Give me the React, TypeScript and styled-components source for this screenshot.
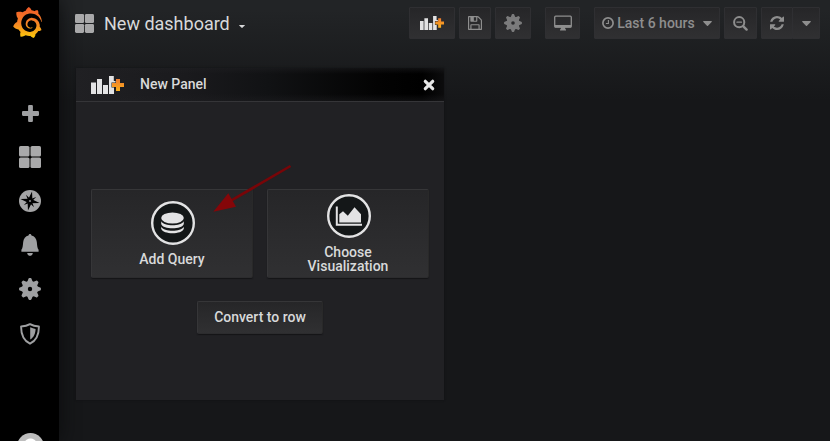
import React from "react";
import styled, { createGlobalStyle } from "styled-components";
import { SiGrafana } from "react-icons/si";

const Global = createGlobalStyle`
  * { box-sizing: border-box; }
  html, body { margin: 0; background: #161719; overflow: hidden; }
  body { font-family: Roboto, "Liberation Sans", sans-serif; color: #d8d9da; }
  svg { display: block; flex: none; }
  button { font: inherit; }
`;

const Shell = styled.div`
  display: flex;
  width: 830px;
  height: 441px;
  overflow: hidden;
  background: linear-gradient(180deg, #222426 10px, #161719 100px);
`;

const Sidebar = styled.aside`
  display: flex;
  flex-direction: column;
  align-items: center;
  flex: none;
  width: 59px;
  height: 441px;
  padding-top: 7px;
  background: #000;
  box-shadow: 0 0 20px #0b0c0d;
`;

const Brand = styled.div`
  flex: none;
  height: 84px;
  width: 36px;
`;

const SideLink = styled.a`
  display: flex;
  align-items: center;
  justify-content: center;
  width: 59px;
  height: 44.1px;
  flex: none;
  padding-left: 1px;
  color: #9fa0a2;
`;

const Avatar = styled.div`
  flex: none;
  width: 27px;
  height: 27px;
  margin: 77px 0 0 1px;
  border-radius: 50%;
  background: radial-gradient(circle at 50% 12px, #fff 0 6px, #bdbdbd 7px);
`;

const Main = styled.main`
  flex: 1;
  min-width: 0;
  padding: 7px 10px 0 17px;
`;

const Navbar = styled.header`
  display: flex;
  align-items: flex-start;
  justify-content: space-between;
  height: 61px;
`;

const Title = styled.div`
  display: flex;
  align-items: center;
  height: 32px;
  margin-left: -1px;
  font-size: 18px;
  white-space: nowrap;
  color: #d8d9da;
`;

const TitleText = styled.span`
  margin: 1px 9px 0 10px;
`;

const TitleCaret = styled.span`
  margin-top: 6px;
`;

const Tools = styled.div`
  display: flex;
`;

const Tool = styled.button<{ $w: number; $gap?: number; $dim?: boolean }>`
  display: flex;
  align-items: center;
  justify-content: center;
  width: ${(p) => p.$w}px;
  height: 32px;
  padding: 0;
  margin-left: ${(p) => p.$gap ?? 0}px;
  border: 1px solid #2f2f32;
  border-radius: 1px;
  background: linear-gradient(180deg, #262628, #303032);
  color: ${(p) => (p.$dim ? "#7b7b7c" : "#8e8e8e")};
  font-size: 14px;
  font-weight: 500;
  white-space: nowrap;
`;

const ToolLabel = styled.span`
  margin: 0 8px 0 3px;
`;

const Panel = styled.section`
  width: 368px;
  height: 332px;
  background: #212124;
  box-shadow: 0 0 2px #101113;
`;

const PanelHeader = styled.div`
  display: flex;
  align-items: center;
  height: 34px;
  padding: 0 9px 0 15px;
  border-bottom: 1px solid #353538;
  background:
    linear-gradient(180deg, rgba(31, 31, 34, 0.5), transparent 6px, transparent 26px, rgba(31, 31, 34, 0.45)),
    linear-gradient(90deg, #202023, #1a1a1d 30%, #111214 52%, #030303 82%, #000 94%, #0c0c0d);
`;

const PanelTitle = styled.h1`
  flex: 1;
  margin: 0 0 2px 16px;
  font-size: 14px;
  font-weight: 500;
  line-height: 18px;
`;

const PanelBody = styled.div`
  display: flex;
  flex-direction: column;
  align-items: center;
  padding-top: 87px;
`;

const Choices = styled.div`
  display: flex;
  gap: 14px;
`;

const buttonSurface = `
  border: 1px solid #363638;
  border-right-color: #292929;
  border-bottom-color: #2c2c2e;
  border-radius: 2px;
  background: linear-gradient(180deg, #262628, #303032);
  box-shadow: 0 1px 1px #151517;
  color: #d8d9da;
  font-size: 14px;
  font-weight: 500;
  line-height: 14px;
`;

const Choice = styled.button`
  ${buttonSurface}
  display: flex;
  flex-direction: column;
  align-items: center;
  justify-content: center;
  gap: 7px;
  width: 162px;
  height: 89px;
  padding: 0 30px;
`;

const ChoiceIcon = styled.span`
  padding-left: 2px;
`;

const Convert = styled.button`
  ${buttonSurface}
  width: 126px;
  height: 33px;
  margin-top: 23px;
  padding: 0 0 1px;
`;

const Pointer = styled.svg`
  position: absolute;
  left: 205px;
  top: 160px;
  pointer-events: none;
`;

function Logo() {
  return (
    <>
      <svg width="0" height="0">
        <defs>
          <linearGradient id="flame" x1="0" y1="0" x2="0" y2="1">
            <stop offset="0" stopColor="#f05a28" />
            <stop offset="0.5" stopColor="#f58026" />
            <stop offset="1" stopColor="#fbca0a" />
          </linearGradient>
        </defs>
      </svg>
      <SiGrafana size={31} fill="url(#flame)" />
    </>
  );
}

function Grid({ size }: { size: number }) {
  return (
    <svg width={size} height={size} viewBox="0 0 22 22" fill="#a9a9aa">
      <rect width="10.5" height="10.5" rx="1.6" />
      <rect x="11.5" width="10.5" height="10.5" rx="1.6" />
      <rect y="11.5" width="10.5" height="10.5" rx="1.6" />
      <rect x="11.5" y="11.5" width="10.5" height="10.5" rx="1.6" />
    </svg>
  );
}

function Plus() {
  return (
    <svg width="17" height="17" viewBox="0 0 17 17" fill="currentColor">
      <rect x="6.1" y="0" width="4.8" height="17" rx="1.1" />
      <rect x="0" y="6.1" width="17" height="4.8" rx="1.1" />
    </svg>
  );
}

function Compass() {
  return (
    <svg width="22" height="22" viewBox="0 0 22 22">
      <circle cx="11" cy="11" r="11" fill="#a5a5a6" />
      <g transform="rotate(12 11 11)" fill="#000">
        <path d="M11 1.2 13 9 20.800 11 13 13 11 20.800 9 13 1.200 11 9 9Z" />
        <path d="M5.800 5.800 10 8.500 12 8.500 16.200 5.800 13.500 10 13.500 12 16.200 16.200 12 13.500 10 13.500 5.800 16.200 8.500 12 8.500 10Z" />
      </g>
      <circle cx="11" cy="11" r="1.1" fill="#858586" />
    </svg>
  );
}

function Bell() {
  return (
    <svg width="18" height="22" viewBox="0 0 18 22" fill="currentColor">
      <path d="M9 0C8.2 0 7.6.6 7.5 1.5 4.5 2.2 2.5 4.7 2.2 8 1.8 12 1.7 14 .4 15.8V17.7H17.6V15.8C16.3 14 16.2 12 15.8 8 15.5 4.7 13.500 2.200 10.500 1.500 10.400.6 9.800 0 9 0Z" />
      <path d="M6.200 19H11.800C11.600 20.800 10.600 21.800 9 21.800S6.400 20.800 6.200 19Z" />
    </svg>
  );
}

const TEETH = [0, 45, 90, 135, 180, 225, 270, 315];

function Gear({ size, hole }: { size: number; hole: string }) {
  return (
    <svg width={size} height={size} viewBox="0 0 22 22" fill="currentColor">
      <circle cx="11" cy="11" r="8" />
      {TEETH.map((a) => (
        <path key={a} transform={`rotate(${a} 11 11)`} d="M8 4.500 9.400.9Q9.600.1 10.300.1H11.700Q12.400.1 12.600.9L14 4.500Z" />
      ))}
      <circle cx="11" cy="11" r="2.200" fill={hole} />
    </svg>
  );
}

function Shield() {
  return (
    <svg width="20" height="22" viewBox="0 0 20 22">
      <path d="M10 1.100C7.500 2.700 4.300 3.400 1.100 3.500 1 11.500 3.700 17.500 10 20.700 16.300 17.500 19 11.500 18.900 3.500 15.700 3.400 12.500 2.700 10 1.100Z" fill="none" stroke="currentColor" strokeWidth="1.900" strokeLinejoin="round" />
      <path d="M10.200 4.300C12 5.200 13.800 5.700 15.600 5.900 15.400 10.500 14 14 10.200 16.600Z" fill="currentColor" />
    </svg>
  );
}

function AddPanel({ width, height, gradient }: { width: number; height: number; gradient: string }) {
  return (
    <svg width={width} height={height} viewBox="0 0 33 18" preserveAspectRatio="none">
      <defs>
        <linearGradient id={gradient} x1="0" y1="0" x2="0" y2="1">
          <stop offset="0" stopColor="#ee7a2e" />
          <stop offset="1" stopColor="#fbb01c" />
        </linearGradient>
      </defs>
      <path fill="#e3e3e4" d="M0 6.500H5V18H0ZM6 3H11V18H6ZM12 9H17V18H12ZM18 0H22.800V5H24.500V6.500H20.500V11.500H23V18H18Z" />
      <path fill={`url(#${gradient})`} d="M25 3H29V7H33V11H29V15H25V11H21V7H25Z" />
    </svg>
  );
}

function Save() {
  return (
    <svg width="14" height="14" viewBox="0 0 1536 1536" fill="currentColor">
      <path d="M384 1408h768v-384h-768v384zm896 0h128v-896q0-14-10-38.500t-20-34.500l-281-281q-10-10-34-20t-39-10v416q0 40-28 68t-68 28h-576q-40 0-68-28t-28-68v-416h-128v1280h128v-416q0-40 28-68t68-28h832q40 0 68 28t28 68v416zm-384-928v-320q0-13-9.500-22.500t-22.500-9.500h-192q-13 0-22.500 9.500t-9.500 22.500v320q0 13 9.500 22.500t22.500 9.500h192q13 0 22.500-9.500t9.500-22.500zm640 32v928q0 40-28 68t-68 28h-1344q-40 0-68-28t-28-68v-1344q0-40 28-68t68-28h928q40 0 88 20t76 48l280 280q28 28 48 76t20 88z" />
    </svg>
  );
}

function Monitor() {
  return (
    <svg width="18" height="16" viewBox="0 0 18 16">
      <rect x=".7" y="1.200" width="16.600" height="11" rx="1" fill="none" stroke="currentColor" strokeWidth="1.300" />
      <path d="M1 10H17V12.500H1ZM6.800 12.500H11.200V14.200H12V15.600H6V14.200H6.800Z" fill="currentColor" />
    </svg>
  );
}

function Clock() {
  return (
    <svg width="12" height="12" viewBox="0 0 12 12" fill="none" stroke="currentColor">
      <circle cx="6" cy="6" r="5.100" strokeWidth="1.700" />
      <path d="M6.400 3V6.500H3.900" strokeWidth="1.100" />
    </svg>
  );
}

function Caret({ width, height }: { width: number; height: number }) {
  return (
    <svg width={width} height={height} viewBox="0 0 10 5" preserveAspectRatio="none" fill="currentColor">
      <path d="M.7 0H9.300Q10.200.2 9.600.9L5.600 4.700Q5 5.200 4.400 4.700L.4.900Q-.2.2.7 0Z" />
    </svg>
  );
}

function ZoomOut() {
  return (
    <svg width="15" height="15" viewBox="0 0 15 15" fill="none" stroke="currentColor" strokeLinecap="round">
      <circle cx="6.200" cy="6.200" r="5.100" strokeWidth="2" />
      <path d="M10.300 10.300 13.600 13.600" strokeWidth="2.400" />
      <path d="M3.900 6.200H8.500" strokeWidth="1.200" />
    </svg>
  );
}

function Refresh() {
  return (
    <svg width="14" height="14" viewBox="0 0 1536 1536" fill="currentColor">
      <path d="M1511 928q0 5-1 7-64 268-268 434.500t-478 166.500q-146 0-282.500-55t-243.500-157l-129 129q-19 19-45 19t-45-19-19-45v-448q0-26 19-45t45-19h448q26 0 45 19t19 45-19 45l-137 137q71 66 161 102t187 36q134 0 250-65t186-179q11-17 53-117 8-23 30-23h192q13 0 22.500 9.500t9.500 22.500zm25-800v448q0 26-19 45t-45 19h-448q-26 0-45-19t-19-45 19-45l138-138q-148-137-349-137-134 0-250 65t-186 179q-11 17-53 117-8 23-30 23h-199q-13 0-22.500-9.500t-9.500-22.500v-7q65-268 270-434.500t480-166.500q146 0 284 55.500t245 156.500l130-129q19-19 45-19t45 19 19 45z" />
    </svg>
  );
}

function Close() {
  return (
    <svg width="12" height="12" viewBox="0 0 12 12" stroke="#e6e6e6" strokeWidth="3.200" strokeLinecap="round">
      <path d="M2.300 2.300 9.700 9.700M9.700 2.300 2.300 9.700" />
    </svg>
  );
}

function QueryIcon() {
  return (
    <svg width="44" height="44" viewBox="0 0 44 44" fill="#e3e3e4">
      <circle cx="22" cy="22" r="20.800" fill="#141718" stroke="#e3e3e4" strokeWidth="2.400" />
      <ellipse cx="21.500" cy="17" rx="11.300" ry="5.600" />
      <path d="M10.200 20.300C13 25.600 30 25.600 32.800 20.300V23C31 28.800 12 28.800 10.200 23Z" />
      <path d="M10.200 25.700C13 31 30 31 32.800 25.700V27.800C31 33.800 12 33.800 10.200 27.800Z" />
    </svg>
  );
}

function ChartIcon() {
  return (
    <svg width="44" height="44" viewBox="0 0 44 44">
      <circle cx="22" cy="22" r="20.800" fill="#141718" stroke="#e3e3e4" strokeWidth="2.400" />
      <path d="M9.800 12.600V30.700H35" fill="none" stroke="#e3e3e4" strokeWidth="2" />
      <path d="M12.300 28.500V20.300L16 17.300 20.800 21.700 27.500 13.200 34 20.200V28.500Z" fill="#e3e3e4" />
    </svg>
  );
}

export default function App() {
  return (
    <>
      <Global />
      <Shell>
        <Sidebar>
          <Brand><Logo /></Brand>
          <SideLink><Plus /></SideLink>
          <SideLink><Grid size={22} /></SideLink>
          <SideLink><Compass /></SideLink>
          <SideLink><Bell /></SideLink>
          <SideLink><Gear size={22} hole="#000" /></SideLink>
          <SideLink><Shield /></SideLink>
          <Avatar />
        </Sidebar>
        <Main>
          <Navbar>
            <Title>
              <Grid size={19} />
              <TitleText>New dashboard</TitleText>
              <TitleCaret><Caret width={6} height={3} /></TitleCaret>
            </Title>
            <Tools>
              <Tool $w={46}><AddPanel width={24} height={14} gradient="plus-toolbar" /></Tool>
              <Tool $w={32} $gap={4}><Save /></Tool>
              <Tool $w={36} $gap={4} $dim><Gear size={18} hole="#2b2b2d" /></Tool>
              <Tool $w={35} $gap={14}><Monitor /></Tool>
              <Tool $w={126} $gap={14}>
                <Clock />
                <ToolLabel>Last 6 hours</ToolLabel>
                <Caret width={9} height={5} />
              </Tool>
              <Tool $w={33} $gap={4}><ZoomOut /></Tool>
              <Tool $w={32} $gap={4}><Refresh /></Tool>
              <Tool $w={28} $gap={-1}><Caret width={9} height={5} /></Tool>
            </Tools>
          </Navbar>
          <Panel>
            <PanelHeader>
              <AddPanel width={33} height={18} gradient="plus-panel" />
              <PanelTitle>New Panel</PanelTitle>
              <Close />
            </PanelHeader>
            <PanelBody>
              <Choices>
                <Choice><ChoiceIcon><QueryIcon /></ChoiceIcon><span>Add Query</span></Choice>
                <Choice><ChoiceIcon><ChartIcon /></ChoiceIcon><span>Choose Visualization</span></Choice>
              </Choices>
              <Convert>Convert to row</Convert>
            </PanelBody>
          </Panel>
        </Main>
      </Shell>
      <Pointer width="90" height="60" viewBox="0 0 90 60">
        <path d="M85.500 6 26 40.700" stroke="#780508" strokeWidth="2.600" />
        <path d="M8.300 51.700 23.300 33.300 31 46.700Z" fill="#850609" />
      </Pointer>
    </>
  );
}
